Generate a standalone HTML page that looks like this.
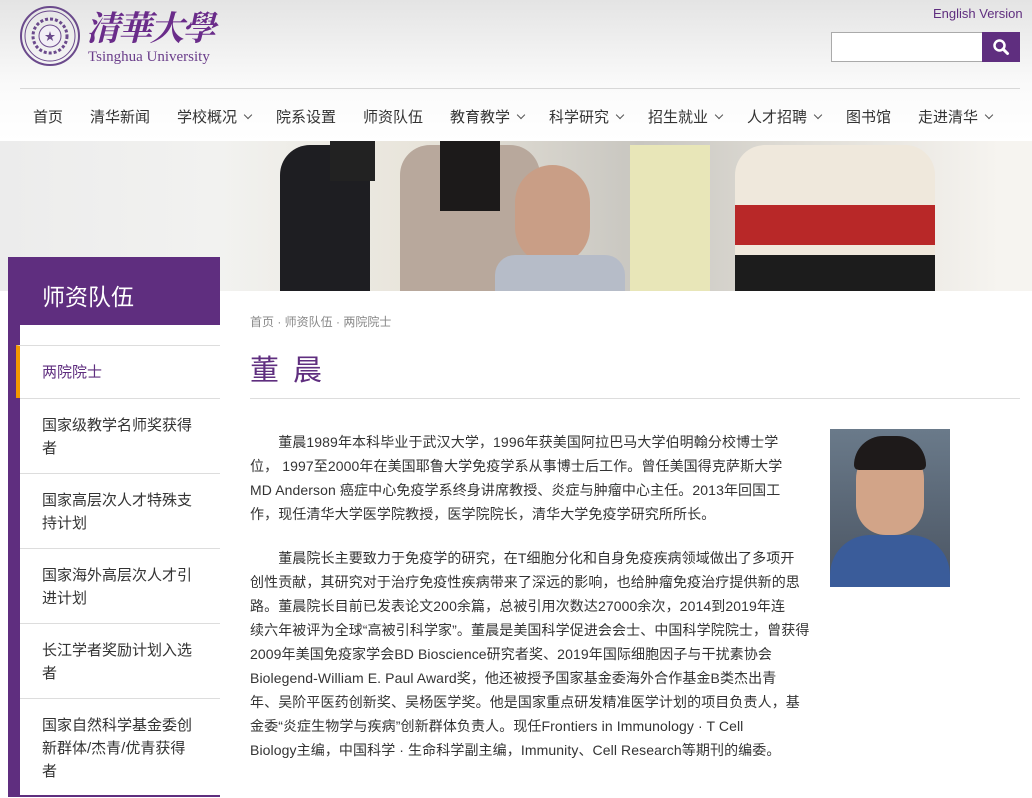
<!DOCTYPE html>
<html><head><meta charset="utf-8"><style>
*{margin:0;padding:0;box-sizing:border-box}
body{width:1032px;height:789px;overflow:hidden;background:#fff;font-family:"Liberation Sans","Noto Sans CJK SC",sans-serif;position:relative;color:#333}
.hdr{position:absolute;left:0;top:0;width:1032px;height:141px;background:linear-gradient(#e4e4e4,#fafafa 85px,#fff 141px)}
.ab{position:absolute}
.nav{position:absolute;top:88px;left:20px;width:1000px;border-top:1px solid #d8d8d8;height:52px}
.nav span{position:absolute;top:17px;font-size:15px;color:#333;white-space:nowrap}
.ar{display:inline-block;width:6px;height:6px;border-right:1px solid #555;border-bottom:1px solid #555;transform:rotate(45deg);margin-left:8px;position:relative;top:-4px}
.side{position:absolute;left:8px;top:257px;width:212px;height:540px;background:#5f2e7f}
.list{position:absolute;left:20px;top:325px;width:200px;height:470px;background:#fff}
.item{position:absolute;left:0;width:200px;border-top:1px solid #ddd;font-size:15px;color:#333;padding-left:22px;line-height:23px}
.t{position:absolute;left:250px;font-size:14px;white-space:nowrap;color:#333;letter-spacing:0.1px}
</style></head><body>
<div class="hdr"></div>
<svg class="ab" style="left:19px;top:5px" width="62" height="62" viewBox="0 0 62 62"><circle cx="31" cy="31" r="29" fill="none" stroke="#6b4a8c" stroke-width="2"/><circle cx="31" cy="31" r="25" fill="none" stroke="#6b4a8c" stroke-width="1"/><circle cx="31" cy="31" r="17" fill="none" stroke="#6b4a8c" stroke-width="3" stroke-dasharray="3 2"/><circle cx="31" cy="31" r="11" fill="#f2eef6" stroke="#6b4a8c"/><text x="31" y="35" text-anchor="middle" font-size="11" fill="#6b4a8c">★</text></svg>
<div class="ab" style="left:86px;top:4px;font-size:34px;color:#6a2c8a;font-family:'Noto Serif CJK SC',serif;letter-spacing:-2px;font-weight:bold;font-style:italic;line-height:44px">清華大學</div>
<div class="ab" style="left:88px;top:49px;font-size:15px;color:#6a3d8a;font-family:'Liberation Serif',serif">Tsinghua University</div>
<div class="ab" style="left:933px;top:6px;font-size:13px;color:#5f2e7f">English Version</div>
<div class="ab" style="left:831px;top:32px;width:152px;height:30px;background:#fff;border:1px solid #aaa"></div>
<div class="ab" style="left:982px;top:32px;width:38px;height:30px;background:#5f2e7f"></div>
<svg class="ab" style="left:992px;top:38px" width="18" height="18" viewBox="0 0 18 18"><circle cx="7.5" cy="7.5" r="5" fill="none" stroke="#fff" stroke-width="2.5"/><path d="M11 11L15.5 15.5" stroke="#fff" stroke-width="3" stroke-linecap="round"/></svg>
<div class="nav">
<span style="left:13px">首页</span><span style="left:70px">清华新闻</span><span style="left:157px">学校概况<i class="ar"></i></span><span style="left:256px">院系设置</span><span style="left:343px">师资队伍</span><span style="left:430px">教育教学<i class="ar"></i></span><span style="left:529px">科学研究<i class="ar"></i></span><span style="left:628px">招生就业<i class="ar"></i></span><span style="left:727px">人才招聘<i class="ar"></i></span><span style="left:826px">图书馆</span><span style="left:898px">走进清华<i class="ar"></i></span>
</div>
<div class="ab" style="left:0;top:141px;width:1032px;height:150px;background:linear-gradient(90deg,#ececec,#f2f2f0 220px,#e8e4da 420px,#c8c6c0 640px,#e0ddd6 800px,#f6f4f0 1000px)"></div>
<div class="ab" style="left:280px;top:145px;width:90px;height:146px;background:#1e1e22;border-radius:30px 30px 0 0"></div>
<div class="ab" style="left:330px;top:141px;width:45px;height:40px;background:#222"></div>
<div class="ab" style="left:400px;top:145px;width:140px;height:146px;background:#b8a89c;border-radius:30px 30px 0 0"></div>
<div class="ab" style="left:440px;top:141px;width:60px;height:70px;background:#1c1a1a"></div>
<div class="ab" style="left:515px;top:165px;width:75px;height:100px;background:#c99e86;border-radius:40px"></div>
<div class="ab" style="left:495px;top:255px;width:130px;height:36px;background:#b6bcc8;border-radius:20px 20px 0 0"></div>
<div class="ab" style="left:630px;top:145px;width:80px;height:146px;background:#e8e6b8"></div>
<div class="ab" style="left:735px;top:145px;width:200px;height:146px;background:#efe8dc;border-radius:30px 30px 0 0"></div>
<div class="ab" style="left:735px;top:205px;width:200px;height:40px;background:#b82828"></div>
<div class="ab" style="left:735px;top:255px;width:200px;height:36px;background:#1c1c1c"></div>
<div class="side"></div>
<div class="ab" style="left:42px;top:278px;font-size:23px;color:#fff">师资队伍</div>
<div class="list">
<div class="item" style="top:20px;height:53px;padding-top:15px;color:#5f2e7f;border-left:4px solid #f39800;padding-left:22px;left:-4px;width:204px">两院院士</div>
<div class="item" style="top:73px;height:75px;padding-top:15px">国家级教学名师奖获得<br>者</div>
<div class="item" style="top:148px;height:75px;padding-top:15px">国家高层次人才特殊支<br>持计划</div>
<div class="item" style="top:223px;height:75px;padding-top:15px">国家海外高层次人才引<br>进计划</div>
<div class="item" style="top:298px;height:75px;padding-top:15px">长江学者奖励计划入选<br>者</div>
<div class="item" style="top:373px;height:100px;padding-top:15px">国家自然科学基金委创<br>新群体/杰青/优青获得<br>者</div>
</div>
<div class="ab" style="left:250px;top:313px;font-size:12px;color:#888">首页 · 师资队伍 · 两院院士</div>
<div class="ab" style="left:250px;top:347px;font-size:29px;color:#5f2e7f;letter-spacing:3px">董 晨</div>
<div class="ab" style="left:250px;top:398px;width:770px;border-top:1px solid #ddd"></div>
<div class="ab" style="left:830px;top:429px;width:120px;height:158px;background:linear-gradient(#6a7a8a,#4a5462)"></div>
<div class="ab" style="left:856px;top:445px;width:68px;height:90px;background:#d2a488;border-radius:34px 34px 30px 30px"></div>
<div class="ab" style="left:854px;top:436px;width:72px;height:34px;background:#1e1a1a;border-radius:36px 36px 6px 6px"></div>
<div class="ab" style="left:830px;top:535px;width:120px;height:52px;background:#3a5c9a;border-radius:40px 40px 0 0"></div>
<div class="t" style="top:432px">　　董晨1989年本科毕业于武汉大学，1996年获美国阿拉巴马大学伯明翰分校博士学</div>
<div class="t" style="top:456px">位， 1997至2000年在美国耶鲁大学免疫学系从事博士后工作。曾任美国得克萨斯大学</div>
<div class="t" style="top:480px">MD Anderson 癌症中心免疫学系终身讲席教授、炎症与肿瘤中心主任。2013年回国工</div>
<div class="t" style="top:504px">作，现任清华大学医学院教授，医学院院长，清华大学免疫学研究所所长。</div>
<div class="t" style="top:548px">　　董晨院长主要致力于免疫学的研究，在T细胞分化和自身免疫疾病领域做出了多项开</div>
<div class="t" style="top:572px">创性贡献，其研究对于治疗免疫性疾病带来了深远的影响，也给肿瘤免疫治疗提供新的思</div>
<div class="t" style="top:596px">路。董晨院长目前已发表论文200余篇，总被引用次数达27000余次，2014到2019年连</div>
<div class="t" style="top:620px">续六年被评为全球“高被引科学家”。董晨是美国科学促进会会士、中国科学院院士，曾获得</div>
<div class="t" style="top:644px">2009年美国免疫家学会BD Bioscience研究者奖、2019年国际细胞因子与干扰素协会</div>
<div class="t" style="top:668px">Biolegend-William E. Paul Award奖，他还被授予国家基金委海外合作基金B类杰出青</div>
<div class="t" style="top:692px">年、吴阶平医药创新奖、吴杨医学奖。他是国家重点研发精准医学计划的项目负责人，基</div>
<div class="t" style="top:716px">金委“炎症生物学与疾病”创新群体负责人。现任Frontiers in Immunology · T Cell</div>
<div class="t" style="top:740px">Biology主编，中国科学 · 生命科学副主编，Immunity、Cell Research等期刊的编委。</div>
</body></html>
